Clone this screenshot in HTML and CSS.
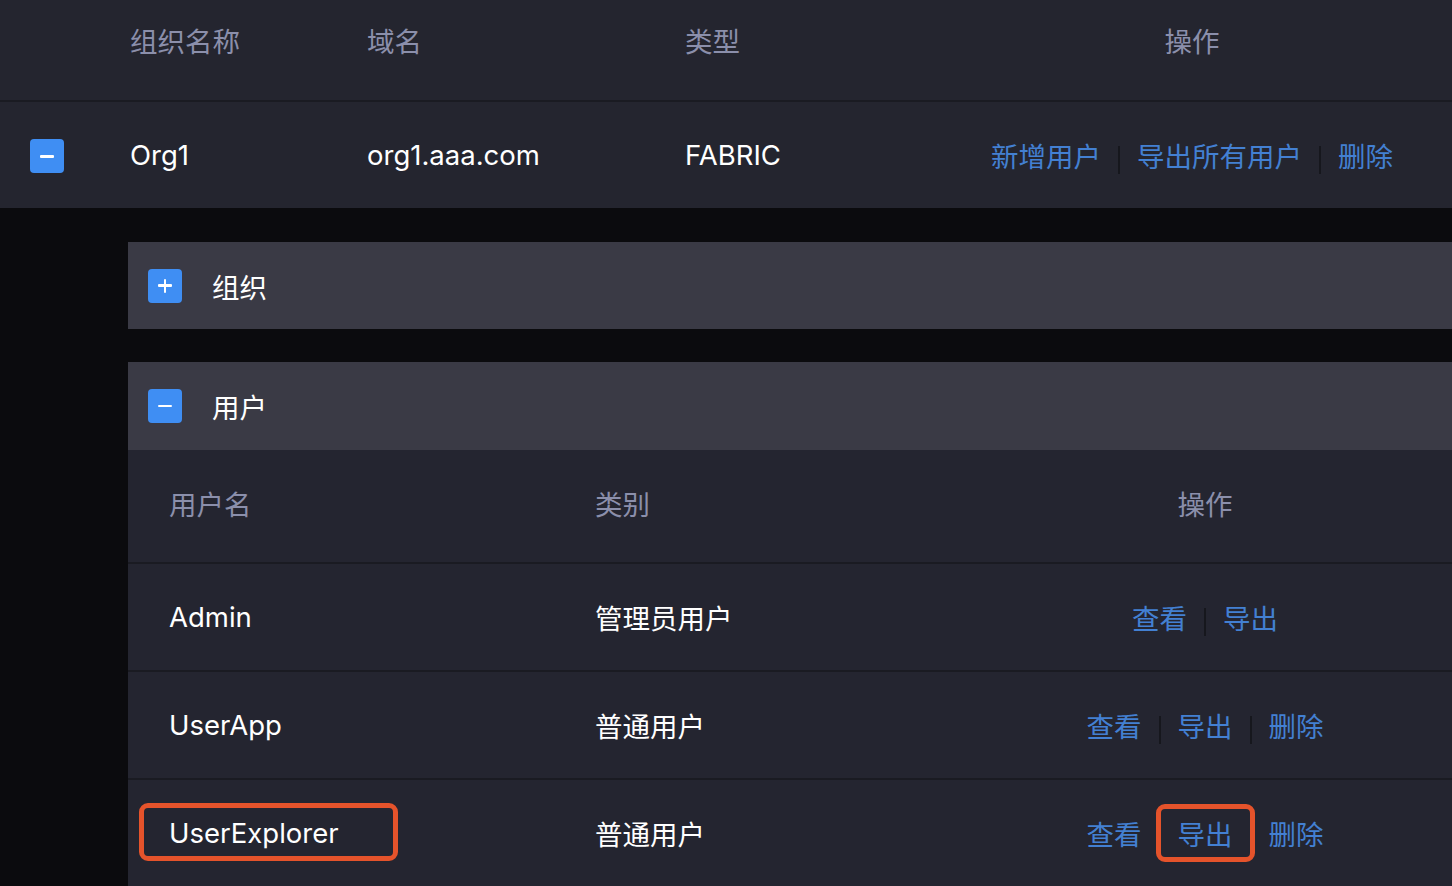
FILE: index.html
```html
<!DOCTYPE html>
<html lang="zh-CN">
<head>
    <meta charset="UTF-8">
    <meta name="viewport" content="width=device-width, initial-scale=1.0">
    <title>组织管理</title>
    <link rel="stylesheet" href="styles.css">
</head>
<body>
    <div class="org-table">
        <div class="org-row org-head">
            <div></div>
            <div class="cell">组织名称</div>
            <div class="cell">域名</div>
            <div class="cell">类型</div>
            <div class="cell ops">操作</div>
        </div>
        <div class="org-row">
            <div class="cell"><span class="toggle minus"></span></div>
            <div class="cell">Org1</div>
            <div class="cell">org1.aaa.com</div>
            <div class="cell">FABRIC</div>
            <div class="cell ops">
                <a href="#">新增用户</a><span class="sep"></span><a href="#">导出所有用户</a><span class="sep"></span><a href="#">删除</a>
            </div>
        </div>
    </div>

    <div class="detail">
        <div class="panel-head">
            <span class="toggle plus"></span>
            <span>组织</span>
        </div>

        <div class="panel-head users-head">
            <span class="toggle minus"></span>
            <span>用户</span>
        </div>
        <div class="user-table">
            <div class="user-row user-head">
                <div class="cell">用户名</div>
                <div class="cell">类别</div>
                <div class="cell ops">操作</div>
            </div>
            <div class="user-row">
                <div class="cell">Admin</div>
                <div class="cell">管理员用户</div>
                <div class="cell ops"><a href="#">查看</a><span class="sep"></span><a href="#">导出</a></div>
            </div>
            <div class="user-row">
                <div class="cell">UserApp</div>
                <div class="cell">普通用户</div>
                <div class="cell ops"><a href="#">查看</a><span class="sep"></span><a href="#">导出</a><span class="sep"></span><a href="#">删除</a></div>
            </div>
            <div class="user-row">
                <div class="cell"><span class="mark mark-name">UserExplorer</span></div>
                <div class="cell">普通用户</div>
                <div class="cell ops"><a href="#">查看</a><span class="sep"></span><a href="#" class="mark mark-link">导出</a><span class="sep"></span><a href="#">删除</a></div>
            </div>
        </div>
    </div>
</body>
</html>
```

FILE: styles.css
```css
html, body {
    margin: 0;
    height: 886px;
    overflow: hidden;
}
body {
    background: #0b0b0e;
    color: #ffffff;
    font-family: "Inter", "Noto Sans CJK SC", sans-serif;
    font-size: 27.5px;
}
a {
    color: #4380d2;
    text-decoration: none;
}
.org-table {
    background: #24252f;
}
.org-row {
    display: grid;
    grid-template-columns: 100px 237px 318px 277px 1fr;
    align-items: center;
    height: 106px;
}
.org-head {
    height: 80px;
    padding-bottom: 20px;
    border-bottom: 2px solid #1a1b22;
    color: #8b8fab;
}
.org-row .cell {
    padding-left: 30px;
}
.toggle {
    display: inline-flex;
    align-items: center;
    justify-content: center;
    width: 34px;
    height: 34px;
    border-radius: 4px;
    background: #3f8ef3;
    vertical-align: middle;
    position: relative;
}
.toggle::before {
    content: "";
    width: 14px;
    height: 2.5px;
    border-radius: 1px;
    background: #ffffff;
}
.toggle.plus::after {
    content: "";
    position: absolute;
    width: 2.5px;
    height: 14px;
    border-radius: 1px;
    background: #ffffff;
}
.sep {
    display: inline-block;
    width: 2px;
    height: 28px;
    margin: 0 17px;
    background: #16171d;
    vertical-align: middle;
}
.detail {
    margin-left: 128px;
    padding-top: 34px;
}
.panel-head {
    display: flex;
    align-items: center;
    gap: 30px;
    height: 87px;
    padding-left: 20px;
    background: #3a3a45;
}
.users-head {
    margin-top: 33px;
    height: 88px;
}
.user-table {
    background: #242530;
}
.user-row {
    display: grid;
    grid-template-columns: 426px 404px 1fr;
    align-items: center;
    height: 106px;
    border-top: 2px solid #1a1b22;
}
.user-row .cell {
    padding-left: 41px;
}
.org-row .cell.ops,
.user-row .cell.ops {
    padding-left: 0;
    text-align: center;
}
.user-head {
    height: 106px;
    padding-bottom: 6px;
    border-top: none;
    color: #8b8fab;
}
.mark {
    position: relative;
}
.mark::after {
    content: "";
    position: absolute;
    border: 5px solid #e5532b;
    border-radius: 9px;
}
.mark-name::after {
    left: -30px;
    top: -13px;
    width: 249px;
    height: 48px;
}
.mark-link::after {
    left: -22px;
    top: -14px;
    width: 89px;
    height: 48px;
}
```
